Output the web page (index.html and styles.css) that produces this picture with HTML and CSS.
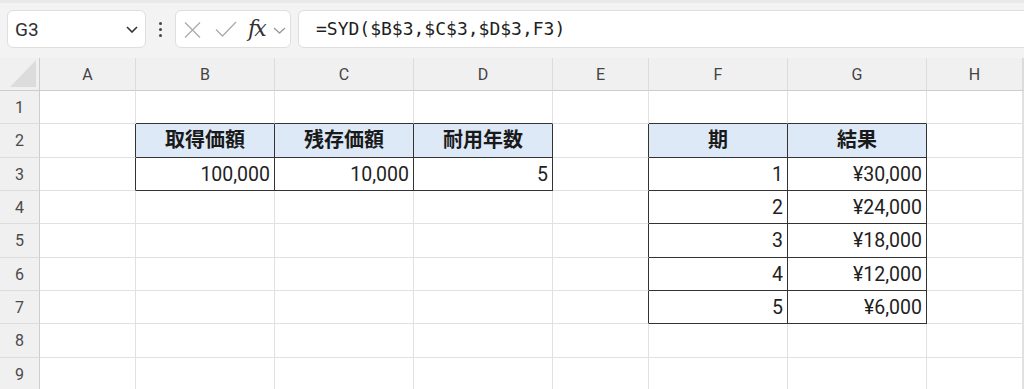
FILE: index.html
```html
<!DOCTYPE html>
<html lang="ja">
<head>
  <meta charset="UTF-8" />
  <meta name="viewport" content="width=device-width, initial-scale=1.0" />
  <title>SYD</title>
  <link rel="stylesheet" href="styles.css">
</head>
<body>
  <div class="toolbar">
    <div class="namebox">
      <span class="cellref">G3</span>
      <svg class="chev" width="12" height="7" viewBox="0 0 12 7"><path d="M1 1 L6 6 L11 1" /></svg>
    </div>
    <div class="more"><i></i><i></i><i></i></div>
    <div class="fxbox">
      <svg class="ic-x" width="17" height="16" viewBox="0 0 17 16"><path d="M1 0.5 L16 15.5 M16 0.5 L1 15.5" /></svg>
      <svg class="ic-ok" width="22" height="16" viewBox="0 0 22 16"><path d="M1 8.5 L7.5 15 L21 1" /></svg>
      <span class="fx">fx</span>
      <svg class="ic-down" width="13" height="7" viewBox="0 0 13 7"><path d="M1 1 L6.5 6 L12 1" /></svg>
    </div>
    <div class="formula">=SYD($B$3,$C$3,$D$3,F3)</div>
  </div>

  <div class="sheet">
    <div class="corner"><span class="tri"></span></div>
    <div class="ch">A</div><div class="ch">B</div><div class="ch">C</div><div class="ch">D</div>
    <div class="ch">E</div><div class="ch">F</div><div class="ch">G</div><div class="ch">H</div><div class="ch"></div>

    <div class="rh">1</div>
    <div class="c"></div><div class="c tt"></div><div class="c tt"></div><div class="c tt"></div>
    <div class="c"></div><div class="c tt"></div><div class="c tt"></div><div class="c"></div><div class="c"></div>

    <div class="rh">2</div>
    <div class="c tl"></div><div class="c t hd">取得価額</div><div class="c t hd">残存価額</div><div class="c t hd">耐用年数</div>
    <div class="c tl"></div><div class="c t hd">期</div><div class="c t hd">結果</div><div class="c"></div><div class="c"></div>

    <div class="rh">3</div>
    <div class="c tl"></div><div class="c t num">100,000</div><div class="c t num">10,000</div><div class="c t num">5</div>
    <div class="c tl"></div><div class="c t num">1</div><div class="c t num">¥30,000</div><div class="c"></div><div class="c"></div>

    <div class="rh">4</div>
    <div class="c"></div><div class="c"></div><div class="c"></div><div class="c"></div>
    <div class="c tl"></div><div class="c t num">2</div><div class="c t num">¥24,000</div><div class="c"></div><div class="c"></div>

    <div class="rh">5</div>
    <div class="c"></div><div class="c"></div><div class="c"></div><div class="c"></div>
    <div class="c tl"></div><div class="c t num">3</div><div class="c t num">¥18,000</div><div class="c"></div><div class="c"></div>

    <div class="rh">6</div>
    <div class="c"></div><div class="c"></div><div class="c"></div><div class="c"></div>
    <div class="c tl"></div><div class="c t num">4</div><div class="c t num">¥12,000</div><div class="c"></div><div class="c"></div>

    <div class="rh">7</div>
    <div class="c"></div><div class="c"></div><div class="c"></div><div class="c"></div>
    <div class="c tl"></div><div class="c t num">5</div><div class="c t num">¥6,000</div><div class="c"></div><div class="c"></div>

    <div class="rh">8</div>
    <div class="c"></div><div class="c"></div><div class="c"></div><div class="c"></div>
    <div class="c"></div><div class="c"></div><div class="c"></div><div class="c"></div><div class="c"></div>

    <div class="rh">9</div>
    <div class="c"></div><div class="c"></div><div class="c"></div><div class="c"></div>
    <div class="c"></div><div class="c"></div><div class="c"></div><div class="c"></div><div class="c"></div>
  </div>
</body>
</html>
```

FILE: styles.css
```css
body {
  margin: 0;
  background: #fff;
  font-family: Roboto, "Noto Sans CJK JP", sans-serif;
  color: #1f1f1f;
  overflow: hidden;
}

/* formula bar */
.toolbar {
  display: flex;
  align-items: flex-start;
  height: 58px;
  box-sizing: border-box;
  padding: 7px 0 0 7px;
  background: #f3f3f3;
  border-top: 3px solid #e9e9e9;
}
.namebox {
  display: flex;
  align-items: center;
  justify-content: space-between;
  width: 139px;
  height: 38px;
  box-sizing: border-box;
  padding: 0 7px 0 7px;
  background: #fff;
  border: 1px solid #dedede;
  border-radius: 6px;
}
.cellref {
  font-size: 19px;
  color: #303030;
}
.chev path, .ic-down path {
  fill: none;
  stroke: #333;
  stroke-width: 1.6;
}
.ic-down path {
  stroke: #9a9a9a;
  stroke-width: 1.3;
}
.more {
  display: flex;
  flex-direction: column;
  align-items: center;
  gap: 3px;
  width: 29px;
  padding-top: 12px;
}
.more i {
  width: 3px;
  height: 3px;
  border-radius: 50%;
  background: #444;
}
.fxbox {
  display: flex;
  align-items: center;
  width: 116px;
  height: 38px;
  box-sizing: border-box;
  padding-left: 8px;
  background: #fff;
  border: 1px solid #dedede;
  border-radius: 6px;
}
.ic-x path, .ic-ok path {
  fill: none;
  stroke: #ababab;
  stroke-width: 1.3;
}
.ic-x { margin-top: 1px; }
.ic-ok { margin-left: 14px; }
.fx {
  margin-left: 11px;
  font-family: "DejaVu Serif", serif;
  font-style: italic;
  font-size: 22px;
  color: #333;
  letter-spacing: -2px;
  line-height: 1;
}
.ic-down { margin-left: 8px; margin-top: 2px; }
.formula {
  flex: 1;
  height: 38px;
  box-sizing: border-box;
  margin-left: 7px;
  margin-right: -12px;
  padding-left: 17px;
  background: #fff;
  border: 1px solid #dedede;
  border-radius: 6px;
  font-family: "DejaVu Sans Mono", monospace;
  font-size: 18px;
  line-height: 36px;
  color: #1f1f1f;
}

/* grid */
.sheet {
  display: grid;
  grid-template-columns: 40px 96px 139px 139px 139px 96px 139px 139px 96px 1fr;
  grid-template-rows: 33px 33px 34px 33px 33px 34px 33px 33px 34px 33px;
}
.corner, .ch, .rh {
  background: #f0f0f0;
  box-sizing: border-box;
}
.corner {
  border-right: 1px solid #cdcdcd;
  border-bottom: 1px solid #cdcdcd;
  padding: 2px 3px 0 0;
  display: flex;
  justify-content: flex-end;
}
.tri {
  width: 0;
  height: 0;
  border-left: 26px solid transparent;
  border-bottom: 27px solid #dcdcdc;
}
.ch {
  border-right: 1px solid #dcdcdc;
  border-bottom: 1px solid #cdcdcd;
  text-align: center;
  font-size: 16px;
  line-height: 34px;
  color: #444;
}
.rh {
  border-right: 1px solid #cdcdcd;
  border-bottom: 1px solid #dcdcdc;
  text-align: center;
  font-size: 16px;
  line-height: 34px;
  color: #4a4a4a;
}
.c {
  box-sizing: border-box;
  border-right: 1px solid #e1e1e1;
  border-bottom: 1px solid #e1e1e1;
  font-size: 19.5px;
  line-height: 33px;
  white-space: nowrap;
}
.t {
  border-right-color: #333;
  border-bottom-color: #333;
}
.tl { border-right-color: #333; }
.tt { border-bottom-color: #333; }
.hd {
  background: #dde9f7;
  text-align: center;
  font-weight: 700;
  font-size: 20px;
  color: #1a1a1a;
}
.num {
  text-align: right;
  padding-right: 4px;
}
```
